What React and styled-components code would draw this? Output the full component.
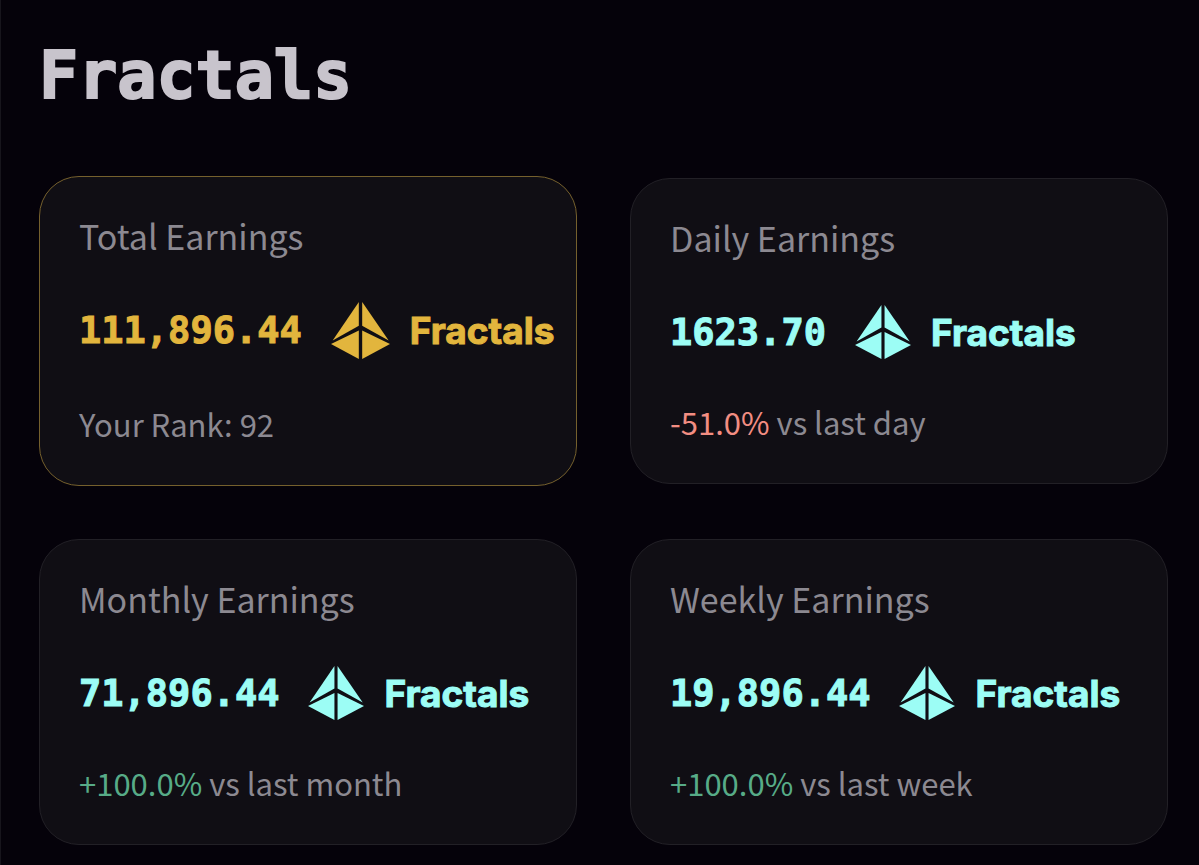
import React from "react";
import styled, { createGlobalStyle } from "styled-components";

const earnings = [
  {
    id: "total",
    label: "Total Earnings",
    amount: "111,896.44",
    note: "Your Rank: 92",
    highlight: true,
  },
  {
    id: "daily",
    label: "Daily Earnings",
    amount: "1623.70",
    change: "-51.0%",
    note: "vs last day",
  },
  {
    id: "monthly",
    label: "Monthly Earnings",
    amount: "71,896.44",
    change: "+100.0%",
    note: "vs last month",
  },
  {
    id: "weekly",
    label: "Weekly Earnings",
    amount: "19,896.44",
    change: "+100.0%",
    note: "vs last week",
  },
];

const FractalIcon = ({ size }) => (
  <Icon viewBox="0 0 178 172" $size={size} aria-hidden="true">
    <path d="M84 0V72L5 116Z" />
    <path d="M94 0V72L174 116Z" />
    <path d="M84 86V172L0 127Z" />
    <path d="M94 86V172L178 127Z" />
  </Icon>
);

const EarningsCard = ({ label, amount, change, note, highlight }) => (
  <Card $highlight={highlight}>
    <Label>{label}</Label>
    <Value $highlight={highlight}>
      <Amount>{amount}</Amount>
      <FractalIcon size={highlight ? 59 : 56} />
      <Unit>Fractals</Unit>
    </Value>
    <Note>
      {change && (
        <>
          <Change $down={change.startsWith("-")}>{change}</Change>{" "}
        </>
      )}
      {note}
    </Note>
  </Card>
);

const App = () => {
  return (
    <Page>
      <GlobalStyle />
      <Title>Fractals</Title>
      <Grid>
        {earnings.map(({ id, ...item }) => (
          <EarningsCard key={id} {...item} />
        ))}
      </Grid>
    </Page>
  );
};

const GlobalStyle = createGlobalStyle`
  :root {
    --color-background: #05020a;
    --color-card: #100e14;
    --color-line: #222026;
    --color-heading: #c8c4cc;
    --color-text: #8c8991;
    --color-gold: #e2b53d;
    --color-cyan: #9cfdf5;
    --color-red: #f28d82;
    --color-green: #57ab87;
    --font-body: "Noto Sans CJK SC", "Noto Sans", sans-serif;
    --font-mono: "DejaVu Sans Mono", monospace;
    --font-brand: Inter, "Liberation Sans", sans-serif;
  }

  * {
    box-sizing: border-box;
  }

  body {
    margin: 0;
    background: var(--color-background);
    color: var(--color-text);
    font-family: var(--font-body);
  }
`;

const Page = styled.main`
  min-height: 100vh;
  padding: 40px 31px 21px 38px;
  border-left: 1px solid #17151c;
`;

const Title = styled.h1`
  margin: 0 0 64px;
  color: var(--color-heading);
  font-family: var(--font-mono);
  font-size: 65px;
  font-weight: 700;
  line-height: 72px;
  -webkit-text-stroke: 2px currentColor;
`;

const Grid = styled.div`
  display: grid;
  grid-template-columns: 1fr 1fr;
  align-items: center;
  gap: 53px;
`;

const Card = styled.section`
  display: flex;
  flex-direction: column;
  padding: 38px 0 41px 39px;
  border: 1px solid
    ${({ $highlight }) => ($highlight ? "#75602d" : "var(--color-line)")};
  border-radius: 40px;
  background: var(--color-card);
`;

const Label = styled.h2`
  margin: 0 0 44px;
  font-size: 34px;
  font-weight: 400;
  line-height: 42px;
`;

const Value = styled.div`
  display: flex;
  align-items: center;
  height: 58px;
  margin-bottom: ${({ $highlight }) => ($highlight ? "45px" : "41px")};
  color: ${({ $highlight }) =>
    $highlight ? "var(--color-gold)" : "var(--color-cyan)"};
  white-space: nowrap;
`;

const Amount = styled.span`
  font-family: var(--font-mono);
  font-size: 37px;
  font-weight: 700;
  -webkit-text-stroke: 1px currentColor;
`;

const Icon = styled.svg`
  flex: none;
  width: ${({ $size }) => $size}px;
  height: ${({ $size }) => $size}px;
  margin: 0 20px 0 29px;
  fill: currentColor;
`;

const Unit = styled.span`
  font-family: var(--font-brand);
  font-size: 37px;
  font-weight: 700;
  -webkit-text-stroke: 1px currentColor;
`;

const Note = styled.p`
  margin: 0;
  font-size: 31px;
  line-height: 40px;
`;

const Change = styled.span`
  color: ${({ $down }) => ($down ? "var(--color-red)" : "var(--color-green)")};
`;

export default App;
